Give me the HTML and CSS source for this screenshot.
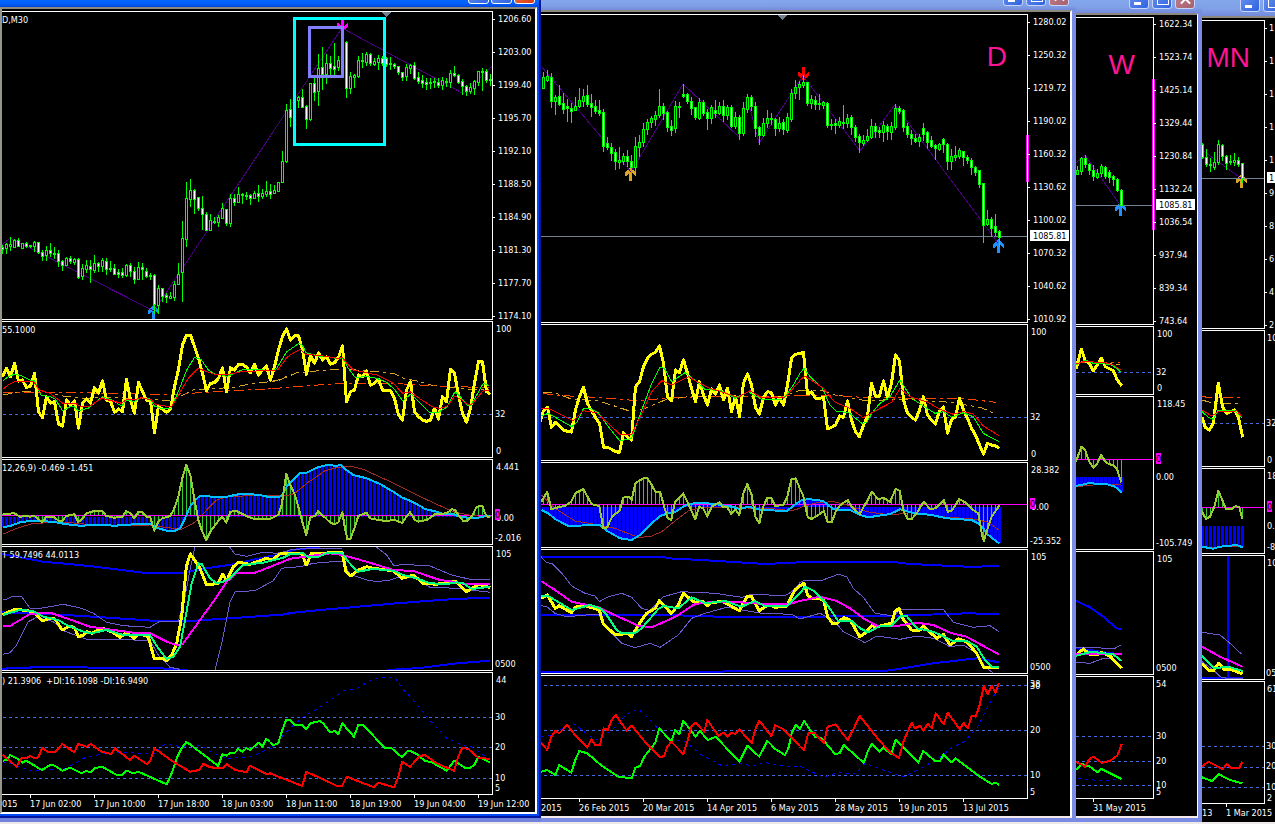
FILE: index.html
```html
<!DOCTYPE html>
<html lang="en">
<head>
<meta charset="utf-8">
<title>Gold charts: M30, D, W, MN</title>
<link rel="stylesheet" href="styles.css">
</head>
<body>
<svg class="defs" aria-hidden="true">
  <defs>
    <path id="arrow-up" d="M.5 0L6 6V9H5L2 6V14H-1V6L-4 9H-5V6Z" />
    <path id="arrow-down" d="M.5 14L6 8V5H5L2 8V0H-1V8L-4 5H-5V8Z" />
  </defs>
</svg>
<main class="desktop">

  <section class="window active m30" aria-label="M30 chart">
    <header class="title">
      <button class="ctl min" aria-label="Minimize"></button><button class="ctl max" aria-label="Maximize"></button><button class="ctl close" aria-label="Close"></button>
    </header>
    <div class="body">
      <div class="plot"><p class="caption">D,M30</p>
        <svg id="m30-price" viewBox="2 12 490 307" preserveAspectRatio="none">
          <path class="marker" d="M381 12H391L386 17Z"/>
          <use href="#arrow-up" class="arrow blue" x="153" y="305"/>
          <use href="#arrow-down" class="arrow pink" x="342" y="18"/>
          <g class="data"></g>
          <rect class="box violet" x="309.5" y="27.5" width="33" height="49"/>
          <rect class="box cyan" x="294.5" y="18.5" width="90" height="126"/>
        </svg></div>
      <svg class="scale" viewBox="493 11 42 309">
        <path class="tick" d="M493 19.5h2M493 52.5h2M493 85.5h2M493 118.5h2M493 151.5h2M493 184.5h2M493 217.5h2M493 250.5h2M493 283.5h2M493 316.5h2"/>
        <text x="498" y="22">1206.60</text><text x="498" y="55">1203.00</text><text x="498" y="88">1199.40</text><text x="498" y="121">1195.70</text><text x="498" y="154">1192.10</text><text x="498" y="187">1188.50</text><text x="498" y="220">1184.90</text><text x="498" y="253">1181.30</text><text x="498" y="286">1177.70</text><text x="498" y="319">1174.10</text>
      </svg>
      <div class="plot"><p class="caption">55.1000</p><svg id="m30-rsi" viewBox="2 322 490 135" preserveAspectRatio="none"></svg></div>
      <svg class="scale" viewBox="493 321 42 137"><text x="496" y="332">100</text><text x="495" y="417">32</text><text x="496" y="454">0</text></svg>
      <div class="plot"><p class="caption">12,26,9) -0.469 -1.451</p><svg id="m30-macd" viewBox="2 460 490 84" preserveAspectRatio="none"></svg></div>
      <svg class="scale" viewBox="493 459 42 86"><text x="496" y="470">4.441</text><text x="496" y="521">0.00</text><rect class="zero" x="495" y="509" width="5" height="11"/><text class="zero-text" x="495" y="518">0</text><text x="495" y="541">-2.016</text></svg>
      <div class="plot"><p class="caption">T 59.7496 44.0113</p><svg id="m30-tdi" viewBox="2 547 490 123" preserveAspectRatio="none"></svg></div>
      <svg class="scale" viewBox="493 546 42 125"><text x="496" y="557">105</text><text x="495" y="667">0500</text></svg>
      <div class="plot"><p class="caption">) 21.3906 &nbsp;+DI:16.1098 -DI:16.9490</p><svg id="m30-adx" viewBox="2 673 490 121" preserveAspectRatio="none"></svg></div>
      <svg class="scale" viewBox="493 672 42 123"><text x="496" y="683">44</text><text x="495" y="720">30</text><text x="495" y="750">20</text><text x="495" y="781">10</text><text x="495" y="791">5</text></svg>
      <div class="dates"><span class="first">015</span><span>17 Jun 02:00</span><span>17 Jun 10:00</span><span>17 Jun 18:00</span><span>18 Jun 03:00</span><span>18 Jun 11:00</span><span>18 Jun 19:00</span><span>19 Jun 04:00</span><span>19 Jun 12:00</span></div>
    </div>
  </section>

  <section class="window daily" aria-label="Daily chart">
    <header class="title">
      <button class="ctl min" aria-label="Minimize"></button><button class="ctl max" aria-label="Maximize"></button><button class="ctl close" aria-label="Close"></button>
    </header>
    <div class="body">
      <div class="plot"><p class="period">D</p>
        <svg id="d-price" viewBox="541 15 486 307" preserveAspectRatio="none">
          <path class="marker" d="M778 15H787L782.5 20Z"/>
          <use href="#arrow-up" class="arrow gold" x="630" y="167"/>
          <use href="#arrow-down" class="arrow red" x="803" y="67"/>
          <use href="#arrow-up" class="arrow blue" x="998" y="239"/>
          <g class="data"></g>
        </svg></div>
      <svg class="scale" viewBox="1028 14 42 309">
        <rect class="range" x="1026" y="135" width="3" height="47"/><path class="tick" d="M1027.5 135v47"/>
        <path class="tick" d="M1028 22.5h2M1028 55.5h2M1028 88.5h2M1028 121.5h2M1028 154.5h2M1028 187.5h2M1028 220.5h2M1028 253.5h2M1028 286.5h2M1028 319.5h2"/>
        <text x="1033" y="25">1280.02</text><text x="1033" y="58">1250.32</text><text x="1033" y="91">1219.72</text><text x="1033" y="124">1190.02</text><text x="1033" y="157">1160.32</text><text x="1033" y="190">1130.62</text><text x="1033" y="223">1100.02</text><text x="1033" y="256">1070.32</text><text x="1033" y="289">1040.62</text><text x="1033" y="322">1010.92</text>
        <rect class="price" x="1030" y="230" width="39" height="11"/><text class="price-text" x="1033" y="239">1085.81</text>
      </svg>
      <div class="plot"><svg id="d-rsi" viewBox="541 325 486 135" preserveAspectRatio="none"></svg></div>
      <svg class="scale" viewBox="1028 324 42 137"><text x="1031" y="335">100</text><text x="1030" y="420">32</text><text x="1031" y="457">0</text></svg>
      <div class="plot"><svg id="d-macd" viewBox="541 463 486 84" preserveAspectRatio="none"></svg></div>
      <svg class="scale" viewBox="1028 462 42 86"><text x="1031" y="473">28.382</text><text x="1031" y="510">0.00</text><rect class="zero" x="1030" y="498" width="5" height="11"/><text class="zero-text" x="1030" y="507">0</text><text x="1030" y="544">-25.352</text></svg>
      <div class="plot"><svg id="d-tdi" viewBox="541 550 486 123" preserveAspectRatio="none"></svg></div>
      <svg class="scale" viewBox="1028 549 42 125"><text x="1031" y="560">105</text><text x="1030" y="670">0500</text></svg>
      <div class="plot"><svg id="d-adx" viewBox="541 676 486 122" preserveAspectRatio="none"></svg></div>
      <svg class="scale" viewBox="1028 675 42 124"><text x="1030" y="687">38</text><text x="1030" y="689">30</text><text x="1030" y="733">20</text><text x="1030" y="778">10</text><text x="1030" y="795">5</text></svg>
      <div class="dates"><span class="first">2015</span><span>26 Feb 2015</span><span>20 Mar 2015</span><span>14 Apr 2015</span><span>6 May 2015</span><span>28 May 2015</span><span>19 Jun 2015</span><span>13 Jul 2015</span></div>
    </div>
  </section>

  <section class="window weekly" aria-label="Weekly chart">
    <header class="title">
      <button class="ctl min" aria-label="Minimize"></button><button class="ctl max" aria-label="Maximize"></button><button class="ctl close" aria-label="Close"></button>
    </header>
    <div class="body">
      <div class="plot"><p class="period">W</p>
        <svg id="w-price" viewBox="1076 18 77 306" preserveAspectRatio="none">
          <use href="#arrow-up" class="arrow blue" x="1120" y="202"/>
          <g class="data"></g>
        </svg></div>
      <svg class="scale" viewBox="1154 17 43 308">
        <rect class="range" x="1152" y="79" width="3" height="151"/><path class="tick" d="M1153.5 79v151"/>
        <path class="tick" d="M1154 24.5h2M1154 57.5h2M1154 90.5h2M1154 123.5h2M1154 156.5h2M1154 189.5h2M1154 222.5h2M1154 255.5h2M1154 288.5h2M1154 321.5h2"/>
        <text x="1159" y="27">1622.34</text><text x="1159" y="60">1523.74</text><text x="1159" y="93">1425.14</text><text x="1159" y="126">1329.44</text><text x="1159" y="159">1230.84</text><text x="1159" y="192">1132.24</text><text x="1159" y="225">1036.54</text><text x="1159" y="258">937.94</text><text x="1159" y="291">839.34</text><text x="1159" y="324">743.64</text>
        <rect class="price" x="1156" y="199" width="39" height="11"/><text class="price-text" x="1159" y="208">1085.81</text>
      </svg>
      <div class="plot"><svg id="w-rsi" viewBox="1076 327 77 67" preserveAspectRatio="none"></svg></div>
      <svg class="scale" viewBox="1154 326 43 69"><text x="1157" y="337">100</text><text x="1156" y="375">32</text><text x="1157" y="391">0</text></svg>
      <div class="plot"><svg id="w-macd" viewBox="1076 397 77 152" preserveAspectRatio="none"></svg></div>
      <svg class="scale" viewBox="1154 396 43 154"><text x="1157" y="407">118.45</text><rect class="zero" x="1156" y="453" width="5" height="11"/><text class="zero-text" x="1156" y="462">0</text><text x="1156" y="480">0.00</text><text x="1156" y="546">-105.749</text></svg>
      <div class="plot"><svg id="w-tdi" viewBox="1076 552 77 122" preserveAspectRatio="none"></svg></div>
      <svg class="scale" viewBox="1154 551 43 124"><text x="1157" y="562">105</text><text x="1156" y="671">0500</text></svg>
      <div class="plot"><svg id="w-adx" viewBox="1076 677 77 121" preserveAspectRatio="none"></svg></div>
      <svg class="scale" viewBox="1154 676 43 123"><text x="1156" y="687">54</text><text x="1156" y="739">30</text><text x="1156" y="764">20</text><text x="1156" y="788">10</text><text x="1156" y="795">5</text></svg>
      <div class="dates"><span class="first"></span><span>31 May 2015</span></div>
    </div>
  </section>

  <section class="window monthly" aria-label="Monthly chart">
    <header class="title">
      <button class="ctl min" aria-label="Minimize"></button><button class="ctl max" aria-label="Maximize"></button>
    </header>
    <div class="body">
      <div class="plot"><p class="period">MN</p>
        <svg id="mn-price" viewBox="1202 21 62 307" preserveAspectRatio="none">
          <use href="#arrow-up" class="arrow gold" x="1241" y="174"/>
          <g class="data"></g>
        </svg></div>
      <svg class="scale" viewBox="1265 20 10 309">
        <path class="tick" d="M1265 28.5h2M1265 61.5h2M1265 94.5h2M1265 127.5h2M1265 160.5h2M1265 193.5h2M1265 226.5h2M1265 259.5h2M1265 292.5h2M1265 325.5h2"/>
        <text x="1269" y="31">1</text><text x="1269" y="64">1</text><text x="1269" y="97">1</text><text x="1269" y="130">1</text><text x="1269" y="163">1</text><text x="1269" y="196">9</text><text x="1269" y="229">8</text><text x="1269" y="262">6</text><text x="1269" y="295">4</text><text x="1269" y="328">2</text>
        <rect class="price" x="1267" y="172" width="8" height="11"/><text class="price-text" x="1269" y="181">1</text>
      </svg>
      <div class="plot"><svg id="mn-rsi" viewBox="1202 331 62 135" preserveAspectRatio="none"></svg></div>
      <svg class="scale" viewBox="1265 330 10 137"><text x="1267" y="341">10</text><text x="1266" y="426">32</text><text x="1267" y="463">0</text></svg>
      <div class="plot"><svg id="mn-macd" viewBox="1202 469 62 84" preserveAspectRatio="none"></svg></div>
      <svg class="scale" viewBox="1265 468 10 86"><text x="1267" y="479">18</text><rect class="zero" x="1267" y="501" width="5" height="11"/><text class="zero-text" x="1267" y="510">0</text><text x="1267" y="529">0.</text><text x="1267" y="550">-8</text></svg>
      <div class="plot"><svg id="mn-tdi" viewBox="1202 556 62 123" preserveAspectRatio="none"></svg></div>
      <svg class="scale" viewBox="1265 555 10 125"><text x="1267" y="566">10</text><text x="1266" y="676">05</text></svg>
      <div class="plot"><svg id="mn-adx" viewBox="1202 682 62 121" preserveAspectRatio="none"></svg></div>
      <svg class="scale" viewBox="1265 681 10 123"><text x="1267" y="692">61</text><text x="1266" y="749">30</text><text x="1266" y="769">20</text><text x="1266" y="790">10</text><text x="1267" y="801">2</text></svg>
      <div class="dates"><span class="first">13</span><span>1 Mar 2015</span></div>
    </div>
  </section>

</main>
<script src="charts.js"></script>
</body>
</html>
```

FILE: styles.css
```css
* { box-sizing: border-box; }

body {
  margin: 0;
  min-height: 100vh;
  background: #ece9e8;
  color: #fff;
  font-family: "DejaVu Sans Condensed", "Liberation Sans", sans-serif;
  font-size: 9px;
  overflow: hidden;
}

p { margin: 0; }

.defs {
  position: absolute;
  width: 0;
  height: 0;
}

.desktop {
  display: grid;
  grid-template-columns: 541fr 535fr 126fr 73fr;
  align-items: start;
  background: #7283de;
}

/* Window chrome */

.window {
  min-width: 0;
  background: #7a8ce4;
}

.title {
  display: flex;
  justify-content: flex-end;
  align-items: flex-end;
  gap: 3px;
  padding: 0 7px 4px 0;
  overflow: hidden;
  background: linear-gradient(#84a7ec, #7f9fe6 60%, #7389dc);
}

.active .title {
  gap: 2px;
  background: linear-gradient(#0268fe, #005cf8 60%, #0046d8);
}

.m30 .title { height: 7px; padding: 0 4px 3px 0; }
.daily .title { height: 10px; }
.weekly .title { height: 13px; }
.monthly .title { height: 16px; padding: 0 0 4px 38px; justify-content: flex-start; }

.ctl {
  position: relative;
  flex: none;
  width: 20px;
  height: 20px;
  padding: 0;
  border: 1px solid #c8d4f8;
  border-radius: 3px;
  background: linear-gradient(135deg, #6c94f0, #2f62e0);
}

.active .ctl { width: 21px; border-color: #fff; }
.close { background: linear-gradient(135deg, #c08090, #a8606c); }
.active .close { background: linear-gradient(135deg, #f08050, #d83810); }

.ctl::before, .ctl::after {
  content: "";
  position: absolute;
  left: 4px;
  bottom: 3px;
}

.min::before { width: 7px; height: 3px; background: #fff; }
.max::before { width: 10px; height: 9px; border: 1px solid #fff; border-top-width: 3px; }
.close::before, .close::after {
  left: 3px;
  bottom: 8px;
  width: 13px;
  height: 2px;
  background: #fff;
  transform: rotate(45deg);
}
.close::after { transform: rotate(-45deg); }

.body {
  display: grid;
  row-gap: 1px;
  grid-template-columns: minmax(0, 1fr) 42px;
  margin-right: 4px;
  padding-top: 2px;
  border-top: 2px solid #8c897c;
  border-right: 2px solid #fff;
  border-bottom: 2px solid #f4ecec;
  background: #000;
}

.m30 { border-bottom: 2px solid #0018a0; border-right: 2px solid #001590; background: #0048f1; }
.m30 .body {
  grid-template-rows: 309px 137px 86px 125px 123px 16px;
  margin-right: 2px;
  margin-bottom: 2px;
  border-left: 2px solid #98958a;
  border-bottom-color: #fff;
}
.daily .body { grid-template-rows: 309px 137px 86px 125px 124px 16px; margin-bottom: 4px; }
.weekly .body {
  grid-template-columns: minmax(0, 1fr) 43px;
  grid-template-rows: 308px 69px 154px 124px 123px 16px;
  margin-bottom: 4px;
  border-right-width: 1px;
}
.monthly .body {
  grid-template-columns: minmax(0, 1fr) 10px;
  grid-template-rows: 309px 137px 86px 125px 123px 17px;
  margin-right: 0;
  border-right: 0;
  border-bottom: 0;
}

/* Panels */

.plot {
  position: relative;
  min-width: 0;
  overflow: hidden;
  border: 1px solid #fff;
  border-left: 0;
}

.plot svg {
  display: block;
  width: 100%;
  height: 100%;
  shape-rendering: crispEdges;
}

.caption {
  position: absolute;
  top: 2px;
  left: 0;
  line-height: 12px;
  white-space: nowrap;
}

.period {
  position: absolute;
  top: 26px;
  right: 20px;
  color: #ff1493;
  font-family: "Liberation Sans", Arial, sans-serif;
  font-size: 28px;
  line-height: 32px;
}

.weekly .period { top: 31px; right: 18px; }
.monthly .period { top: 21px; right: 14px; }

.scale {
  display: block;
  width: 100%;
  height: 100%;
  position: relative;
  overflow: visible;
}

.monthly .scale { overflow: hidden; }
.scale text { fill: #fff; }
.scale .tick { stroke: #fff; shape-rendering: crispEdges; }
.scale .range, .scale .zero { fill: #f0f; }
.scale .zero-text, .scale .price-text { fill: #000; }
.scale .price { fill: #fff; }

.dates {
  grid-column: 1 / -1;
  display: flex;
  min-width: 0;
  margin-top: -1px;
  overflow: hidden;
  line-height: 18px;
  white-space: nowrap;
}

.dates span { position: relative; flex: 0 0 64px; min-width: 0; }
.dates .first { flex: 1 1 0; min-width: 0; overflow: hidden; }
.dates span:not(.first)::before {
  content: "";
  position: absolute;
  top: 0;
  left: 0;
  width: 1px;
  height: 3px;
  background: #fff;
}
.m30 .dates span:last-child { flex-basis: 57px; }
.daily .dates span:last-child { flex-basis: 107px; }
.weekly .dates span:last-child { flex-basis: 104px; }
.monthly .dates span:last-child { flex-basis: 49px; }

/* Price drawing */

.marker { fill: #708090; }
.arrow.blue { fill: #1e90ff; }
.arrow.gold { fill: #daa520; }
.arrow.red { fill: #f00; }
.arrow.pink { fill: #f0f; }
.box { fill: none; stroke-width: 3; }
.box.cyan { stroke: #0ff; }
.box.violet { stroke: #8080ff; }
.wick { fill: none; stroke: #0f0; }
.up { fill: #000; stroke: #0f0; }
.down { fill: #fff; stroke: #0f0; }
.zigzag { fill: none; stroke: #4b0082; }
.bid { fill: none; stroke: #708090; }

/* Indicator lines */

polyline { fill: none; stroke-linejoin: round; }
.level { fill: none; stroke: #4169e1; stroke-dasharray: 3 3; }
.yellow { stroke: #ff0; stroke-width: 3; }
.lime { stroke: #0f0; }
.red1 { stroke: #f00; }
.golden { stroke: #daa520; stroke-dasharray: 9 4 3 4; }
.orange { stroke: #ff4500; stroke-dasharray: 10 4 3 4; }
.sky { stroke: #00bfff; stroke-width: 2; }
.brown { stroke: #a52a2a; }
.olive { stroke: #9acd32; stroke-width: 2; }
.zeroline { fill: none; stroke: #f0f; }
.bars-blue { fill: none; stroke: #00f; stroke-width: 3; }
.bars-green { fill: none; stroke: #32cd32; }
.band { stroke: #00f; stroke-width: 2; }
.slate { stroke: #6a5acd; }
.spring { stroke: #00ff7f; stroke-width: 2; }
.magenta { stroke: #f0f; stroke-width: 2; }
.plus { stroke: #0f0; stroke-width: 2; }
.minus { stroke: #f00; stroke-width: 2; }
.adx { stroke: #00f; stroke-dasharray: 3 4; }
```

FILE: charts.js
```js
const NS = "http://www.w3.org/2000/svg";
const STEP = 4;   // pixels per bar
const UNITS = 3;  // data units per pixel in the indicator series

function add(panel, tag, attrs) {
  const svg = document.getElementById(panel);
  const node = document.createElementNS(NS, tag);
  for (const key in attrs) node.setAttribute(key, attrs[key]);
  (svg.querySelector(".data") || svg).appendChild(node);
}

// Each bar is high,top,bottom,low,direction.
function candles(panel, x0, text) {
  text.trim().split(/\s+/).forEach((bar, i) => {
    if (bar === "-") return;
    const [h, t, b, l, dir] = bar.split(",");
    const x = x0 + i * STEP, top = +t, bottom = +b;
    add(panel, "path", { class: "wick", d: `M${x + .5} ${h}V${+l + 1}` });
    add(panel, "rect", {
      class: dir === "u" ? "up" : "down",
      x: x - .5, y: top + .5, width: 2, height: Math.max(bottom - top, 1)
    });
  });
}

function points(ox, oy, text) {
  return text.trim().split(/\s+/).map(p => {
    const [x, y] = p.split(",").map(Number);
    return [ox + x / UNITS, oy + y / UNITS];
  });
}

function line(panel, cls, ...parts) {
  for (const [ox, oy, text] of parts) {
    add(panel, "polyline", { class: cls, points: points(ox, oy, text).map(p => p.map(n => n.toFixed(1)).join()).join(" ") });
  }
}

// A series with one value for each bar.
function series(panel, cls, x0, oy, text) {
  const pts = text.trim().split(/\s+/).map((y, i) => `${x0 + i * STEP},${(oy + y / UNITS).toFixed(1)}`);
  add(panel, "polyline", { class: cls, points: pts.join(" ") });
}

function bars(panel, cls, base, x0, ...parts) {
  let d = "";
  for (const [ox, oy, text] of parts) {
    const pts = points(ox, oy, text);
    for (let x = x0; x <= pts[pts.length - 1][0] + 1; x += STEP) {
      for (let i = 1; i < pts.length; i++) {
        const [ax, ay] = pts[i - 1], [bx, by] = pts[i];
        if (x >= ax - 1 && x <= bx + (i === pts.length - 1 ? 1 : 0)) {
          const y = ay + (by - ay) * Math.min(1, Math.max(0, (x - ax) / (bx - ax)));
          d += `M${x + .5} ${base}V${Math.round(y)}`;
          break;
        }
      }
    }
  }
  add(panel, "path", { class: cls, d });
}

function level(panel, x1, x2, ...ys) {
  for (const y of ys) add(panel, "path", { class: "level", d: `M${x1} ${y + .5}H${x2}` });
}

function macd(panel, x0, x1, x2, zero, base, sky, brown, olive) {
  bars(panel, "bars-blue", base, x0, ...sky);
  bars(panel, "bars-green", zero, x0, ...olive);
  add(panel, "path", { class: "zeroline", d: `M${x1} ${zero + .5}H${x2}` });
  line(panel, "brown", ...brown);
  line(panel, "sky", ...sky);
  line(panel, "olive", ...olive);
}

/* ---------- M30 ---------- */
add("m30-price", "polyline", { class: "zigzag", points: "2,245 10,238 154,311 342,28 464,94 492,66" });
candles("m30-price", 2, `
245,247,249,253,d 243,244,248,253,u 237,244,246,250,u 239,240,247,247,u 238,240,246,246,d 243,243,248,248,u 242,243,246,247,d 245,245,246,247,d
241,242,246,251,u 242,242,252,253,d 250,252,256,260,d 246,250,255,260,u 243,250,253,256,d 247,253,254,258,u 250,253,261,266,d 260,261,265,270,d
257,258,265,265,u 256,258,261,263,d 258,259,262,264,u 258,259,277,278,d 264,268,276,279,u 260,265,269,272,u 260,266,269,282,d 255,263,270,272,u
262,263,266,271,d 258,260,266,271,u 258,261,269,274,d 261,268,269,271,u 264,268,274,274,d 269,272,274,277,d 268,272,275,277,d 264,265,275,276,u
263,265,271,276,d 267,271,279,283,d 262,267,279,279,u 263,267,269,279,d 268,271,276,277,d 273,275,276,279,d 274,275,304,313,d 285,288,305,313,u
288,288,296,301,d 293,295,297,302,d 292,296,298,298,u 281,284,297,300,u 263,274,284,284,u 221,238,272,301,u 182,198,239,246,u 179,190,199,206,u
189,190,199,213,d 197,197,208,210,d 196,208,214,229,d 212,214,230,230,d 214,220,230,230,u 217,221,222,223,u 215,217,222,226,u 203,208,218,218,u
209,209,223,225,d 194,198,223,226,u 194,198,202,205,d 187,194,202,202,u 193,194,195,203,u 192,195,196,199,u 194,195,198,204,d 191,193,198,198,u
185,193,196,201,d 189,193,196,198,u 181,191,194,196,u 184,191,194,198,d 185,190,193,193,u 182,182,191,191,u 151,161,182,182,u 104,110,161,162,u
99,109,117,126,d - 96,97,100,107,u 89,97,107,107,d 105,106,119,128,d 83,83,119,120,u 78,83,92,100,d 54,68,91,105,u
47,67,74,89,d 54,63,74,83,u 56,63,68,74,d 43,66,69,77,d 56,60,67,70,u - 41,42,88,97,d 72,76,88,93,u
74,75,77,87,u 56,60,76,77,u 53,60,61,67,u 52,54,62,65,u 53,54,63,65,d 58,61,64,65,u 55,58,62,69,u 56,58,63,65,d
57,58,64,66,d 57,63,64,69,u 63,64,66,68,d 66,66,72,74,d 72,72,77,80,d 64,67,76,80,u 64,65,68,73,u 62,65,78,79,d
72,77,81,83,d 75,80,83,87,d 78,82,84,89,d 78,82,83,88,u 78,81,82,87,u 78,82,85,87,d 77,80,85,89,u 78,81,82,86,d
70,73,82,87,u 66,73,75,76,d 74,75,82,83,d 79,81,86,94,d 85,86,91,95,d 83,87,91,93,u 80,81,88,94,u 71,71,82,85,u
68,71,72,90,u 69,71,80,82,d 74,79,80,85,u`);

level("m30-rsi", 3, 492, 414);
line("m30-rsi", "golden",
  [0, 320, "8,225 50,217 110,213 150,218 190,228 260,236 310,232 450,237 500,242 530,235 580,210 700,202 760,190 835,183 862,168"],
  [270, 320, "6,184 35,178 80,158 150,152 215,147 300,153 370,160 400,175 450,185 490,197 580,205 600,210 658,207"]);
line("m30-rsi", "orange",
  [0, 320, "8,217 200,218 350,220 500,224 540,222 600,218 700,212 816,206"],
  [270, 320, "6,206 100,198 220,190 400,192 500,198 658,203"]);
series("m30-rsi", "yellow", 2.5, 320, `170 145 170 130 183 180 203 198 160 275 293 230 250 245 312 318 240 255 243 325 248 237 250 203 220 183
240 243 277 267 275 178 240 280 187 215 240 243 338 258 268 277 268 200 148 75 45 45 80 115 160 212 190 188 175 143 215 143 150 133 133 142
158 133 165 150 138 180 140 90 50 27 60 47 47 90 163 105 130 98 120 110 133 128 112 78 245 215 210 165 170 153 195 190 178 210 212 212 235
285 300 210 185 275 290 300 304 300 265 297 230 245 148 160 225 280 307 265 190 125 125 215 223`);
line("m30-rsi", "lime",
  [0, 320, "8,183 25,170 45,162 65,168 90,180 103,180 122,225 150,230 165,237 188,272 210,260 222,260 235,272 265,265 307,230 335,240 365,258 380,240 400,245 425,233 450,237 463,258 490,267 513,265 535,215 560,150 583,113 603,118 625,150 645,163 665,165 680,170 725,150 760,148 820,152"],
  [270, 320, "10,152 20,145 50,95 70,82 87,70 97,75 108,98 145,108 175,110 205,117 217,112 235,145 255,172 290,170 320,175 350,187 375,210 398,243 422,222 450,250 480,278 505,277 530,262 555,215 575,235 590,255 602,257 620,225 640,190 658,197"]);
line("m30-rsi", "red1",
  [0, 320, "8,208 25,195 45,185 70,185 100,183 118,210 150,220 170,235 188,250 225,250 245,260 270,258 305,235 365,250 380,238 400,240 425,233 455,240 465,252 485,257 515,260 535,225 565,175 595,145 620,155 645,163 685,163 725,155 830,150"],
  [270, 320, "20,150 25,148 50,113 65,102 90,88 105,102 160,108 205,115 217,112 235,135 250,150 275,155 320,165 370,190 398,220 420,215 455,240 490,262 510,265 530,260 555,228 575,240 590,252 605,253 640,212 658,213"]);

macd("m30-macd", 2, 2, 492, 515, 517, [
  [0, 320, "8,622 30,618 60,607 90,603 130,603 175,608 200,613 240,617 300,615 345,617 400,613 450,612 475,625 500,632 525,632 540,625 555,595 570,560 585,540 600,528 640,530 680,530 720,522 745,522 780,525 810,532"],
  [270, 320, "0,532 25,532 35,527 50,500 70,480 90,460 110,458 140,443 170,435 195,437 215,436 225,447 250,465 290,475 330,492 370,515 395,532 415,540 440,552 465,567 500,575 520,582 550,583 570,590 600,594 625,593 650,588 661,587"]
], [
  [0, 320, "8,643 50,625 100,610 200,607 260,613 350,617 450,615 480,620 545,628 580,610 600,592 625,565 650,540 680,530 750,527 810,526"],
  [270, 320, "0,527 50,527 75,520 110,490 140,470 165,452 200,443 240,438 280,448 350,480 430,520 500,553 550,575 600,586 650,590"]
], [
  [0, 320, "8,582 43,580 60,590 80,588 91,590 103,588 115,597 127,607 139,590 150,592 163,592 175,602 187,602 199,588 223,583 235,606 247,597 259,580 283,573 307,573 319,588 343,593 367,590 379,573 391,580 403,595 415,575 427,576 439,590 451,592 463,632 475,605 487,595 511,588 523,565 535,530 547,475 559,435 571,465 583,535 595,600 607,635 619,660 631,635 655,603 667,590 679,608 691,575 710,573 739,588 763,597 810,597"],
  [270, 320, "0,597 25,585 35,555 49,462 61,495 75,525 85,560 97,605 109,645 121,592 135,588 145,573 160,588 180,607 193,613 205,607 217,577 225,625 232,657 241,657 255,620 265,588 290,578 300,595 325,600 345,603 375,600 397,609 409,590 420,577 435,600 445,605 470,600 495,583 530,580 545,568 555,570 570,592 580,603 592,603 605,590 620,560 637,558 645,580 655,592 661,592"]
]);

line("m30-tdi", "band",
  [0, 540, "6,42 60,52 130,65 240,75 350,88 430,98 550,98 600,88 700,73 800,50 869,40"],
  [270, 540, "50,35 80,28 150,22"],
  [0, 540, "6,217 200,225 350,235 470,243 570,243 690,235 869,222"],
  [270, 540, "50,220 150,210 380,190 550,177 661,173"],
  [0, 540, "6,386 150,380 330,384 480,385 560,390"],
  [270, 540, "350,390 450,384 560,370 661,362"]);
line("m30-tdi", "slate",
  [0, 540, "8,177 20,178 35,170 65,170 90,205 110,207 190,193 245,205 280,220 320,247 370,257 450,262 480,243 535,245 555,170 570,90 585,20"],
  [0, 540, "688,20 705,42 740,49 790,37 830,40 869,32"],
  [270, 540, "50,32 60,30 110,25 215,25"],
  [270, 540, "318,20 350,45 372,78 400,73 480,78 545,105 600,118 661,118"],
  [0, 540, "8,343 30,338 50,315 85,245 110,232 160,245 190,272 260,298 350,298 450,302 475,345 510,382 540,388"],
  [0, 540, "645,390 665,310 690,185 705,155 765,152 820,122 845,85 869,82"],
  [270, 540, "50,83 90,80 130,70 190,65 218,65 240,103 290,120 320,125 360,120 400,107 440,115 480,142 560,145 600,150 661,157"]);
line("m30-tdi", "yellow",
  [0, 540, "8,225 45,207 100,215 127,243 150,235 165,237 187,270 210,258 225,265 235,290 250,285 260,275 275,280 307,265 335,275 360,292 380,278 403,295 415,280 445,290 463,357 485,355 500,362 515,345 530,310 545,230 559,80 571,42 590,70 600,85 620,135 655,130 668,103 680,122 700,80 715,67 750,73 800,55 815,60 840,42 869,40"],
  [270, 540, "50,40 95,40 109,75 125,40 217,38 228,95 243,108 260,92 290,80 310,85 370,92 397,115 430,105 460,130 500,133 555,123 590,155 625,133 661,143"]);
line("m30-tdi", "magenta",
  [0, 540, "8,258 30,258 90,222 150,218 200,235 270,260 400,278 450,280 500,305 530,315 548,312 600,240 640,185 680,125 710,98 765,98 800,85 869,57"],
  [270, 540, "55,57 120,48 180,40 217,45 290,65 370,90 430,93 510,120 550,125 590,133 661,133"]);
line("m30-tdi", "spring",
  [0, 540, "8,225 60,210 100,213 130,230 175,240 200,255 250,275 275,280 320,270 370,285 450,285 475,325 500,357 520,350 540,320 555,240 575,130 595,70 605,72 630,115 650,130 670,125 690,115 730,75 790,68 850,53 869,43"],
  [270, 540, "55,43 100,40 115,52 145,50 170,40 217,40 235,65 263,95 310,87 370,92 400,105 440,115 480,130 530,132 560,127 580,130 605,147 661,140"]);

level("m30-adx", 3, 492, 717, 747, 778);
line("m30-adx", "adx",
  [0, 540, "8,665 40,672 90,692 130,690 200,685 250,655 300,643 370,637 460,642 495,612 545,620 600,615 640,640 680,655 750,650 820,622"],
  [270, 540, "6,622 60,565 100,530 160,495 220,453 260,447 310,415 375,412 400,450 430,480 470,530 530,595 580,617 610,622 640,645 661,658"]);
line("m30-adx", "plus",
  [0, 540, "8,662 20,660 31,645 55,658 67,668 79,662 125,690 151,675 165,677 187,692 211,683 245,700 259,692 271,697 283,685 307,680 350,705 367,705 380,692 400,700 415,695 500,733 515,700 530,655 545,625 558,607 570,613 655,678 667,643 679,647 691,638 703,640 715,627 727,635 739,625 751,630 775,608 787,620 799,597 810,605"],
  [270, 540, "0,607 10,615 25,610 35,575 48,540 60,540 75,555 97,555 109,567 121,550 150,543 160,550 180,577 195,573 205,582 217,550 252,590 265,555 280,555 345,625 365,625 385,643 397,652 410,635 420,632 440,642 465,663 485,667 530,692 553,662 585,683 600,683 613,675 625,650 661,668"]);
line("m30-adx", "minus",
  [0, 540, "8,645 50,680 65,653 79,655 91,648 103,655 115,652 127,623 145,637 165,637 187,612 223,637 235,612 260,620 272,612 305,635 333,642 345,625 390,660 403,647 440,672 451,662 463,625 520,665 570,695 598,690 610,672 630,682 668,685 680,672 705,690 740,697 750,677 800,702 810,700"],
  [270, 540, "0,700 97,738 109,695 200,737 217,737 230,710 312,742 325,728 373,742 385,710 397,665 420,680 450,648 465,645 500,670 552,692 565,650 577,623 595,627 625,653 661,657"]);

/* ---------- Daily ---------- */
add("d-price", "path", { class: "bid", d: "M541 236.5H1027" });
add("d-price", "polyline", { class: "zigzag", points: "541,66 631,172 683,84 739,137 747,97 759,143 803,76 860,151 895,105 998,243" });
candles("d-price", 543, `
72,77,88,88,u 70,76,80,81,u 73,77,101,107,d 95,97,101,114,u 85,96,104,105,d 93,103,109,113,d 99,106,108,121,d 103,108,111,122,d
97,106,110,110,u 88,100,106,107,u 89,96,101,106,u 85,95,104,106,d 94,103,107,116,d 100,106,111,113,d 100,110,113,115,d 109,112,146,151,d
137,143,147,149,d 143,147,153,160,d 149,152,161,169,d 147,160,162,168,u 153,156,161,164,u 150,156,161,166,d 155,161,167,173,d 137,146,167,171,u
135,142,147,156,u 123,129,142,146,u 119,122,129,134,u 116,118,122,127,u 111,115,119,125,u 89,106,115,117,u 103,106,113,119,d 111,112,127,131,d
120,126,130,135,d 101,106,128,132,u 102,106,107,117,u 84,94,96,97,d 93,94,101,103,d 97,101,108,114,d 107,107,117,119,d 98,102,118,119,u
100,102,113,115,d 109,112,118,129,d 105,107,118,123,u 100,110,113,117,d 102,106,113,114,u 100,106,115,121,d 105,107,115,119,u 105,107,126,127,d
112,117,126,128,u 115,117,133,139,d 102,108,133,135,u 94,97,109,112,u 95,97,106,110,d 102,106,128,136,d 126,127,135,144,d 118,123,135,136,u
110,118,123,127,u 113,118,119,124,u 118,119,128,135,d 117,123,128,131,u 119,122,129,134,d 113,117,130,132,u 89,93,119,121,u 80,87,93,98,u
81,84,87,99,u 75,82,85,87,u 82,82,103,105,d 95,99,103,108,u 96,100,104,109,d 94,103,104,109,u 101,102,105,108,u 102,103,125,127,d
119,124,125,129,u 119,123,125,133,d 117,121,125,127,u 105,122,123,128,u 114,118,123,127,u 115,117,127,134,d 125,127,137,141,d 134,136,142,152,d
135,140,143,145,u 129,136,140,141,u 119,126,137,138,u 123,126,131,137,d 127,130,132,137,d 121,125,132,141,u 124,126,131,139,d 122,126,132,139,u
104,108,127,129,u 106,108,111,113,d 109,110,127,131,d 123,126,134,137,d 130,134,138,144,d 134,138,141,142,d 134,137,141,146,u 123,128,134,140,d
131,132,142,148,d 136,140,146,147,d 144,145,148,159,d 143,144,149,150,u 138,139,144,152,d 143,144,161,169,d 149,156,161,169,u 146,155,157,160,u
148,150,156,158,u 151,151,157,165,d 155,157,160,163,d 158,160,167,174,d 166,167,172,175,d 170,170,184,187,d 183,183,225,242,d 210,219,224,225,u
217,219,228,236,d 214,226,232,235,d 230,231,237,246,d`);

level("d-rsi", 544, 1027, 417);
line("d-rsi", "golden",
  [535, 320, "24,217 60,218 110,238 190,242 290,275 330,265 390,240 460,230 600,228 740,233 780,215 800,210"],
  [800, 320, "0,210 60,210 100,222 200,243 300,237 450,247 540,262 590,283"]);
line("d-rsi", "orange",
  [535, 320, "24,220 60,226 150,230 310,242 350,238 450,232 540,228 650,230 800,227"],
  [800, 320, "0,227 100,226 200,233 400,235 500,237 588,247"]);
series("d-rsi", "yellow", 539.5, 320, `310 272 262 322 307 318 330 334 336 270 230 202 250 272 292 310 382 382 388 395 397 338 352 360 200 185 140 115 103 97 78
130 232 242 150 158 120 160 205 245 185 225 255 207 222 195 240 205 275 230 290 190 162 195 262 282 232 215 218 255 232 255 195 115 103 100
98 222 215 235 235 232 327 322 315 288 292 243 300 335 350 315 290 190 228 228 183 232 190 105 122 240 280 292 300 270 230 285 300 312 272
260 340 300 290 235 270 295 325 345 375 403 370 375 378 385`);
line("d-rsi", "lime",
  [535, 320, "19,288 40,280 75,300 110,320 125,308 145,267 165,265 190,278 220,320 255,363 290,355 320,270 350,190 375,142 388,145 410,185 450,158 485,185 510,208 560,212 600,235 640,215 680,238 745,237 775,195 795,160"],
  [800, 320, "0,160 12,145 30,170 65,202 90,255 110,275 145,277 185,310 200,308 215,280 240,250 270,230 285,205 300,180 335,235 365,255 405,280 430,275 455,292 490,278 520,290 550,340 597,365"]);
line("d-rsi", "red1",
  [535, 320, "19,265 40,265 115,302 145,272 185,278 255,343 290,343 325,270 350,215 380,182 410,195 460,170 520,203 610,232 645,212 680,233 750,232 795,182"],
  [800, 320, "0,180 15,168 70,205 105,247 150,265 190,293 230,270 275,247 300,205 330,230 380,245 420,268 460,283 490,275 520,282 550,318 597,347"]);

macd("d-macd", 543, 541, 1027, 504, 507, [
  [535, 320, "19,570 40,580 60,597 100,618 180,615 195,615 215,632 255,655 290,660 315,645 345,615 375,588 400,580 420,577 445,560 460,552 500,548 545,553 590,560 615,567 640,560 680,570 755,573 785,550 795,544"],
  [800, 320, "0,542 25,537 70,543 100,568 150,570 180,585 205,592 270,582 300,568 345,580 395,585 440,595 515,600 535,610 550,625 565,645 597,670"]
], [
  [535, 320, "19,525 60,565 120,603 190,615 240,625 310,652 345,650 380,635 430,595 460,573 500,562 700,565 770,572 795,565"],
  [800, 320, "0,563 50,548 100,545 150,557 200,575 270,585 330,578 420,590 520,597 565,607 597,630"]
], [
  [535, 320, "19,545 37,515 49,568 70,562 90,558 109,545 121,520 145,507 170,553 193,558 205,625 217,622 230,592 255,570 265,533 280,530 290,540 301,490 325,475 337,475 350,495 361,515 375,515 385,550 397,593 409,600 420,545 445,520 457,545 481,598 493,560 505,565 517,590 530,560 553,547 565,562 577,562 589,583 601,568 613,585 625,520 637,492 650,525 661,590 673,610 685,560 697,533 709,533 720,557 745,556 757,530 769,478 782,475 795,507"],
  [800, 320, "0,507 10,527 23,592 35,597 55,585 71,573 83,607 95,607 107,575 119,557 143,540 155,560 180,583 191,560 203,540 215,515 235,538 250,533 270,545 287,507 299,512 311,575 323,597 335,597 350,580 371,545 390,567 408,565 431,540 443,575 455,572 478,537 495,547 520,570 535,580 545,640 551,663 563,625 575,590 599,555"]
]);

line("d-tdi", "band",
  [535, 320, "18,710 380,710 400,715 550,723 690,732 795,727"],
  [800, 320, "0,727 290,727 330,732 500,740 597,739"],
  [535, 320, "18,884 400,885 550,890 795,890"],
  [800, 320, "0,890 270,888 500,880 597,882"],
  [535, 320, "18,1056 560,1056 570,1052 795,1052"],
  [800, 320, "0,1052 260,1052 310,1045 400,1030 530,1015 597,1027"]);
line("d-tdi", "slate",
  [535, 320, "18,710 35,728 50,730 85,765 110,798 150,820 180,828 193,845 220,830 260,820 290,832 320,865 345,872 385,830 440,815 540,820 620,832 650,823 750,827 770,815 795,788"],
  [800, 320, "0,787 15,780 60,783 115,763 140,770 160,805 190,832 225,880 280,888 300,870 430,868 460,907 520,922 570,917 597,935"],
  [535, 320, "18,857 35,860 60,880 95,890 190,882 205,905 230,940 260,970 300,983 345,970 375,982 430,945 470,895 510,880 575,862 620,870 680,880 770,883 795,897"],
  [800, 320, "0,897 60,880 100,900 130,935 195,968 230,948 300,958 350,948 400,955 450,980 490,975 530,1000 555,1040 578,1058"]);
line("d-tdi", "yellow",
  [535, 320, "19,835 37,825 61,865 73,857 109,878 121,862 145,855 193,870 205,912 241,945 280,940 289,950 320,900 335,880 361,865 373,842 409,880 430,855 445,820 480,848 505,845 517,857 529,847 565,845 613,872 637,828 649,828 673,873 700,853 721,862 755,858 780,810 795,798"],
  [800, 320, "0,797 12,790 23,825 35,835 70,838 83,890 97,910 110,910 131,893 150,900 165,925 179,950 195,940 215,917 230,920 275,910 285,875 297,865 311,900 335,930 360,930 370,918 410,955 430,943 450,975 475,957 500,965 530,1000 551,1042 597,1042"]);
line("d-tdi", "magenta",
  [535, 320, "19,783 60,810 110,845 190,862 250,890 310,917 350,922 400,900 430,885 480,852 520,847 590,845 700,853 760,853 795,843"],
  [800, 320, "0,843 60,830 110,843 150,865 190,895 230,917 290,918 350,908 400,915 455,940 500,950 550,978 597,1003"]);
line("d-tdi", "spring",
  [535, 320, "19,828 40,828 110,870 165,855 195,865 215,885 245,930 260,940 300,940 320,925 370,867 385,858 430,865 470,832 510,850 570,843 620,860 660,843 690,858 755,858 795,820"],
  [800, 320, "0,820 15,800 40,812 75,845 115,903 155,902 180,925 205,937 240,918 275,917 305,887 320,888 350,925 400,935 460,963 500,963 530,980 555,1020 575,1040 597,1042"]);

level("d-adx", 544, 1027, 685, 730, 775);
line("d-adx", "adx",
  [535, 320, "18,1250 50,1245 75,1230 115,1210 160,1245 190,1260 240,1222 275,1182 310,1167 345,1200 400,1258 450,1265 500,1305 560,1337 620,1330 650,1338 690,1328 740,1337 795,1340"],
  [800, 320, "0,1338 70,1372 115,1357 165,1362 195,1330 250,1350 310,1370 380,1335 420,1312 455,1283 490,1267 530,1225 560,1165 597,1100"]);
line("d-adx", "plus",
  [535, 320, "18,1355 37,1350 61,1365 73,1335 109,1358 121,1320 133,1293 157,1300 200,1337 250,1370 290,1375 301,1343 315,1338 328,1310 361,1268 373,1225 409,1265 421,1230 433,1243 445,1202 482,1250 494,1232 518,1260 542,1250 613,1325 637,1277 673,1310 697,1262 721,1287 750,1305 761,1282 770,1240 782,1215 795,1228"],
  [800, 320, "0,1228 12,1203 45,1250 65,1255 105,1302 119,1300 131,1275 191,1328 203,1295 215,1272 238,1295 250,1282 273,1303 287,1260 355,1328 370,1293 405,1323 420,1323 431,1303 455,1327 466,1315 540,1370 575,1392 587,1388 597,1395"]);
line("d-adx", "minus",
  [535, 320, "18,1268 37,1290 49,1250 61,1232 73,1240 97,1215 120,1245 157,1283 169,1258 181,1275 195,1275 206,1225 218,1230 230,1200 242,1185 275,1232 290,1217 330,1265 375,1312 388,1308 397,1280 409,1265 445,1302 457,1265 469,1220 482,1208 500,1228 508,1235 517,1200 550,1247 566,1238 577,1250 590,1238 601,1242 613,1228 650,1270 661,1228 673,1202 709,1248 721,1215 745,1228 795,1278"],
  [800, 320, "0,1280 12,1290 25,1240 45,1240 71,1270 83,1220 107,1213 143,1260 160,1228 179,1188 230,1252 270,1297 297,1315 311,1262 335,1208 345,1225 360,1217 370,1232 383,1212 395,1225 407,1180 431,1213 443,1178 479,1228 491,1208 503,1225 515,1188 527,1190 539,1155 551,1098 563,1122 575,1098 587,1118 597,1088"]);

/* ---------- Weekly ---------- */
add("w-price", "path", { class: "bid", d: "M1076 205.5H1153" });
add("w-price", "polyline", { class: "zigzag", points: "1076,163 1085,155 1121,206" });
candles("w-price", 1077, `166,170,174,174,u 157,158,171,174,u 155,158,164,167,d 163,164,170,174,d 165,170,176,180,d 169,173,177,178,u
164,166,173,176,u 166,167,176,178,d 170,172,177,182,d 175,176,179,185,d 178,179,190,191,d 189,190,205,206,d`);

level("w-rsi", 1076, 1153, 372);
line("w-rsi", "golden", [1070, 320, "18,128 95,128 150,134"]);
line("w-rsi", "orange", [1070, 320, "18,126 100,127 150,128"]);
line("w-rsi", "yellow", [1070, 320, "18,148 34,87 46,122 58,130 70,152 82,135 94,115 106,140 130,152 142,180 155,197"]);
line("w-rsi", "lime", [1070, 320, "18,135 45,120 70,130 120,133 140,145 152,157"]);
line("w-rsi", "red1", [1070, 320, "18,132 40,125 100,127 130,135 152,150"]);

macd("w-macd", 1077, 1076, 1153, 459, 477,
  [[1070, 320, "18,498 55,490 110,492 135,500 155,517"]],
  [[1070, 320, "18,500 70,495 152,494"]],
  [[1070, 320, "18,425 34,380 46,392 58,425 70,443 82,430 94,405 106,425 118,433 130,435 142,450 154,487"]]);

line("w-tdi", "band", [1070, 320, "18,842 60,862 100,890 140,925 155,927"], [1070, 320, "18,985 60,990 110,998 152,1003"]);
line("w-tdi", "slate", [1070, 320, "18,983 50,982 110,985 135,985 152,975"], [1070, 320, "18,1027 60,1030 100,1015 130,1015 152,1040"]);
line("w-tdi", "yellow", [1070, 320, "18,1005 40,987 60,1003 82,1005 94,997 120,1008 155,1045"]);
line("w-tdi", "magenta", [1070, 320, "18,1003 80,1003 155,1003"]);
line("w-tdi", "spring", [1070, 320, "18,1007 65,995 100,1000 130,1003 155,1023"]);

level("w-adx", 1076, 1153, 736, 761, 785);
line("w-adx", "adx", [1070, 320, "24,1375 70,1380 110,1382 150,1377"]);
line("w-adx", "plus", [1070, 320, "18,1350 36,1332 60,1340 82,1357 94,1347 155,1377"]);
line("w-adx", "minus", [1070, 320, "18,1325 45,1340 58,1318 70,1310 95,1328 120,1323 142,1307 155,1272"]);

/* ---------- Monthly ---------- */
add("mn-price", "path", { class: "bid", d: "M1202 178.5H1264" });
add("mn-price", "polyline", { class: "zigzag", points: "1202,150 1242,179" });
candles("mn-price", 1202, `143,144,157,158,d 149,157,164,166,d 158,164,165,171,u 152,162,167,169,u 140,144,162,164,u 144,145,156,160,d
155,156,163,169,d 155,161,162,164,u 153,160,162,165,u 157,160,164,166,d 163,163,178,182,d`);

level("mn-rsi", 1202, 1264, 423);
line("mn-rsi", "golden", [1070, 320, "396,240 430,250 512,252"]);
line("mn-rsi", "orange", [1070, 320, "396,230 430,233 512,233"]);
line("mn-rsi", "yellow", [1070, 320, "396,290 406,322 418,330 430,310 445,190 458,262 470,280 493,270 505,290 518,352"]);
line("mn-rsi", "lime", [1070, 320, "396,275 415,292 430,298 445,270 495,272 515,293"]);
line("mn-rsi", "red1", [1070, 320, "396,270 425,288 445,275 480,275 500,272 515,290"]);

macd("mn-macd", 1202, 1202, 1264, 507, 526,
  [[1070, 320, "396,680 430,686 450,680 500,675 518,682"]],
  [[1070, 320, "396,682 515,680"]],
  [[1070, 320, "396,575 408,597 420,590 433,560 445,512 457,540 468,567 485,567 497,558 508,562 517,597"]]);

line("mn-tdi", "band", [1070, 320, "474,700 474,1079"], [1070, 320, "396,1073 518,1075"]);
line("mn-tdi", "slate", [1070, 320, "396,937 450,945 480,970 515,1003"], [1070, 320, "396,1025 430,1050 450,1070 470,1075 518,1075"]);
line("mn-tdi", "yellow", [1070, 320, "396,1030 415,1050 430,1052 446,1030 465,1050 480,1047 518,1062"]);
line("mn-tdi", "magenta", [1070, 320, "396,980 450,1010 518,1040"]);
line("mn-tdi", "spring", [1070, 320, "396,1007 430,1043 480,1042 518,1053"]);

level("mn-adx", 1202, 1264, 746, 767, 787);
line("mn-adx", "adx", [1070, 320, "440,1343 500,1345"]);
line("mn-adx", "plus", [1070, 320, "396,1372 425,1383 447,1363 480,1380 517,1390"]);
line("mn-adx", "minus", [1070, 320, "396,1340 415,1325 458,1347 470,1333 485,1345 508,1345 517,1325"]);
```
